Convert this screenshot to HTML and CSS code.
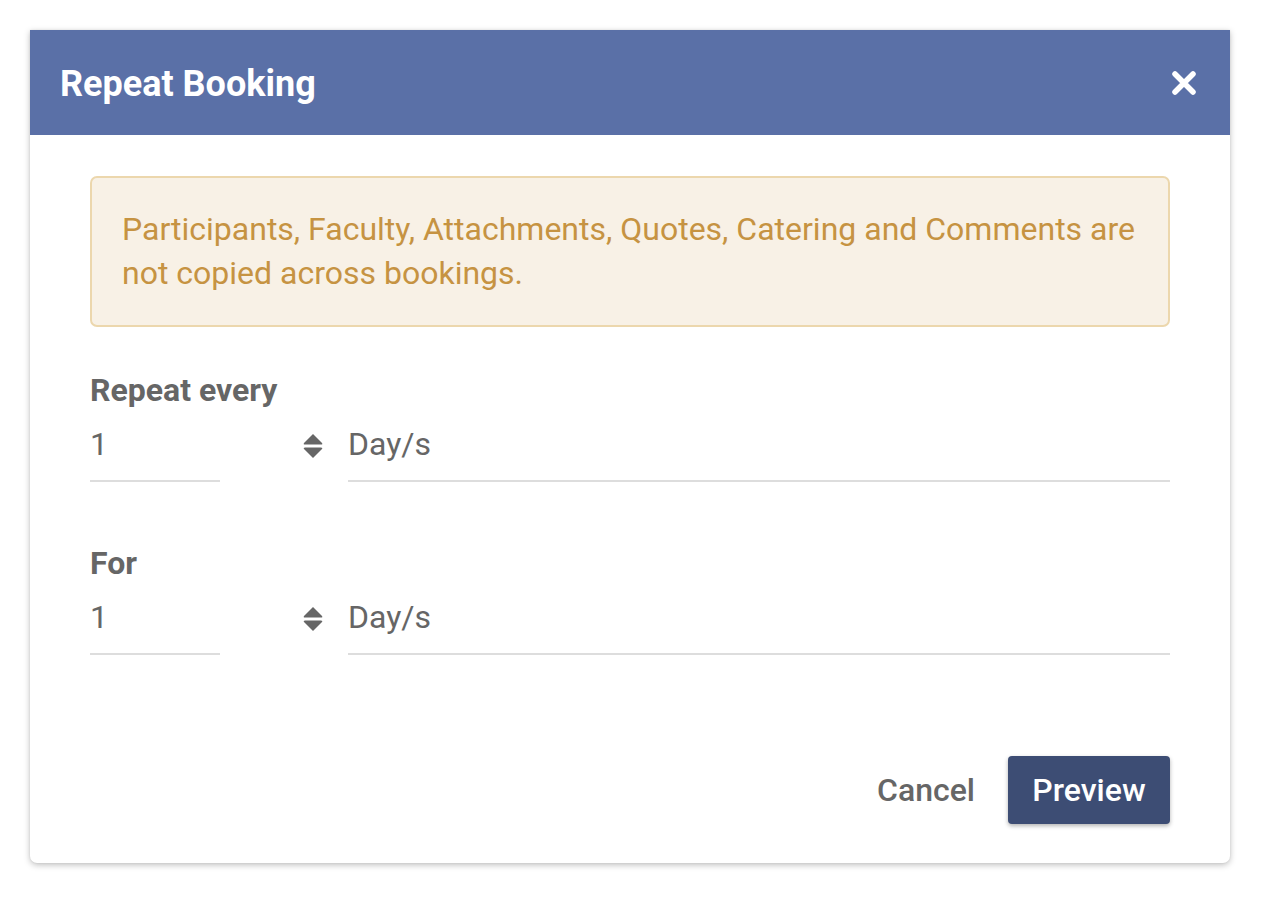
FILE: index.html
```html
<!DOCTYPE html>
<html>
<head>
<meta charset="utf-8">
<link rel="stylesheet" href="styles.css">
</head>
<body>
<div class="dialog">
  <div class="header">
    <h1 class="title">Repeat Booking</h1>
    <button class="close" aria-label="Close">
      <svg width="26" height="26" viewBox="0 0 26 26"><path d="M4 4 L22 22 M22 4 L4 22" stroke="#fff" stroke-width="5.5" stroke-linecap="round"/></svg>
    </button>
  </div>
  <div class="body">
    <div class="alert">Participants, Faculty, Attachments, Quotes, Catering and Comments are not copied across bookings.</div>

    <div class="field first">
      <div class="label">Repeat every</div>
      <div class="row">
        <div class="num">1</div>
        <div class="spin">
          <svg width="20" height="26" viewBox="0 0 20 26"><path d="M10 1 L19 10 Q20 11.5 18 11.5 L2 11.5 Q0 11.5 1 10 Z" fill="#666"/><path d="M10 25 L19 16 Q20 14.5 18 14.5 L2 14.5 Q0 14.5 1 16 Z" fill="#666"/></svg>
        </div>
        <div class="select">Day/s</div>
      </div>
    </div>

    <div class="field second">
      <div class="label">For</div>
      <div class="row">
        <div class="num">1</div>
        <div class="spin">
          <svg width="20" height="26" viewBox="0 0 20 26"><path d="M10 1 L19 10 Q20 11.5 18 11.5 L2 11.5 Q0 11.5 1 10 Z" fill="#666"/><path d="M10 25 L19 16 Q20 14.5 18 14.5 L2 14.5 Q0 14.5 1 16 Z" fill="#666"/></svg>
        </div>
        <div class="select">Day/s</div>
      </div>
    </div>

    <div class="actions">
      <button class="btn-text">Cancel</button>
      <button class="btn-primary">Preview</button>
    </div>
  </div>
</div>
</body>
</html>
```
FILE: styles.css
```css
* { box-sizing: border-box; }
html, body { margin: 0; background: #fff; }
body {
  padding: 30px;
  font-family: Roboto, "Noto Sans", Arial, sans-serif;
  color: #666;
}
.dialog {
  width: 1200px;
  background: #fff;
  border-radius: 0 0 7px 7px;
  box-shadow: 0 2px 6px rgba(0,0,0,0.25), 0 0 2px rgba(0,0,0,0.08);
}
.header {
  height: 105px;
  background: #5a70a7;
  display: flex;
  align-items: center;
  justify-content: space-between;
  padding: 0 30px;
}
.title {
  margin: 0;
  color: #fff;
  font-size: 36px;
  font-weight: 700;
  line-height: 44px;
  padding-top: 2px;
}
.close {
  background: none;
  border: 0;
  padding: 0;
  margin-right: 3px;
  width: 26px;
  height: 26px;
  display: flex;
}
.body {
  padding: 41px 60px 39px;
}
.alert {
  background: #f8f1e6;
  border: 2px solid #ecd7ad;
  border-radius: 7px;
  color: #c69342;
  font-size: 32px;
  line-height: 44px;
  padding: 29px 30px 30px;
}
.field .label {
  font-size: 32px;
  font-weight: 700;
  line-height: 36px;
  color: #666;
}
.field.first { margin-top: 45px; }
.field.second { margin-top: 63px; }
.row {
  display: flex;
  align-items: stretch;
  height: 74px;
}
.num, .select {
  font-size: 32px;
  display: flex;
  align-items: center;
  border-bottom: 2px solid #ddd;
  color: #666;
}
.num { width: 130px; }
.spin {
  width: 128px;
  display: flex;
  align-items: center;
  justify-content: flex-end;
  padding-right: 25px;
  padding-top: 2px;
}
.select { flex: 1; }
.actions {
  display: flex;
  justify-content: flex-end;
  align-items: center;
  gap: 33px;
  margin-top: 101px;
}
.btn-text {
  background: none;
  border: 0;
  font-family: inherit;
  font-size: 32px;
  font-weight: 500;
  color: #666;
  padding: 0;
}
.btn-primary {
  background: #3d4d74;
  color: #fff;
  border: 0;
  border-radius: 4px;
  height: 68px;
  width: 162px;
  font-family: inherit;
  font-size: 32px;
  font-weight: 500;
  box-shadow: 0 2px 4px rgba(0,0,0,0.3);
}
```
